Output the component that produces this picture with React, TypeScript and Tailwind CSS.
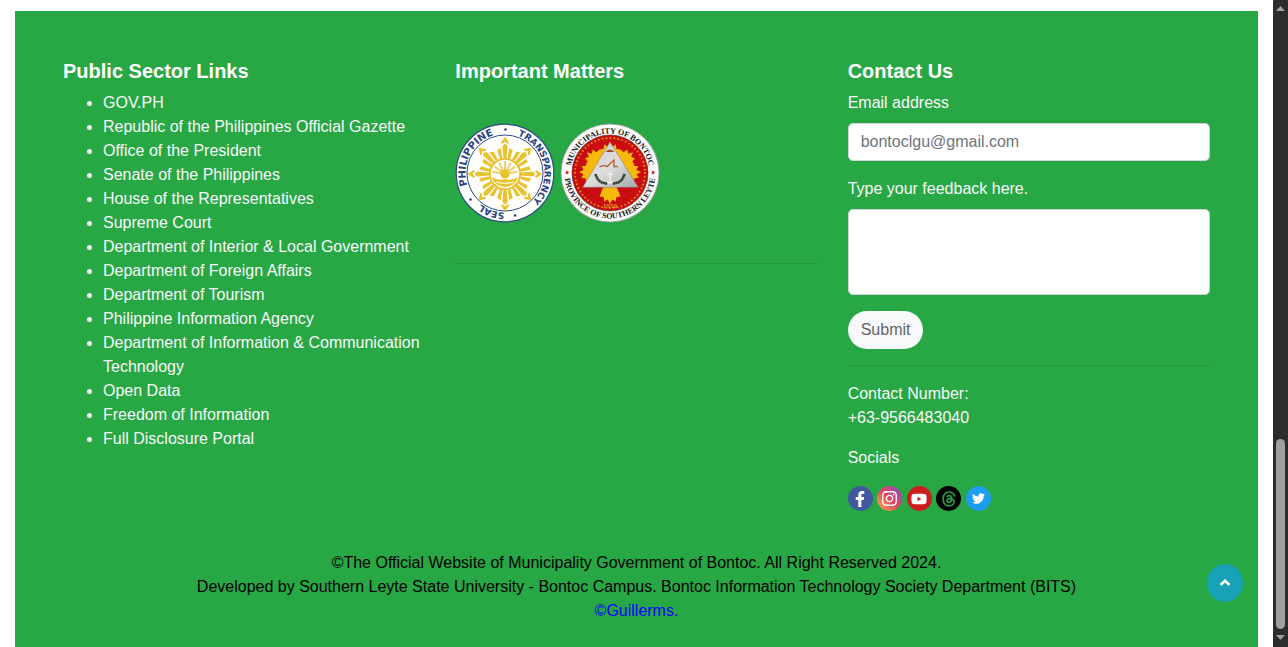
import React from "react";
import { FaFacebookF, FaInstagram, FaTwitter, FaYoutube } from "react-icons/fa";
import { FaThreads } from "react-icons/fa6";

const sectorLinks = [
  "GOV.PH",
  "Republic of the Philippines Official Gazette",
  "Office of the President",
  "Senate of the Philippines",
  "House of the Representatives",
  "Supreme Court",
  "Department of Interior & Local Government",
  "Department of Foreign Affairs",
  "Department of Tourism",
  "Philippine Information Agency",
  "Department of Information & Communication Technology",
  "Open Data",
  "Freedom of Information",
  "Full Disclosure Portal",
];

const socials = [
  { name: "Facebook", Icon: FaFacebookF, circle: "bg-[#4059a0] text-white", size: "size-4" },
  {
    name: "Instagram",
    Icon: FaInstagram,
    circle: "bg-linear-to-tr from-[#fdb045] via-[#e1405f] to-[#8a3ac8] text-white",
    size: "size-[17px]",
  },
  { name: "YouTube", Icon: FaYoutube, circle: "bg-[#cd1c1f] text-white", size: "size-4" },
  { name: "Threads", Icon: FaThreads, circle: "bg-black text-[#28a745]", size: "size-4 stroke-[#28a745] [stroke-width:12px]" },
  { name: "Twitter", Icon: FaTwitter, circle: "bg-[#1d9df0] text-white", size: "size-[13px]" },
];

const eighths = [0, 45, 90, 135, 180, 225, 270, 315];
const sunClusters = [0, 48, 88, 180, 272, 312];

function TransparencySeal() {
  return (
    <svg viewBox="0 0 100 100" className="size-[100px]" role="img" aria-label="Transparency Seal">
      <defs>
        <path id="ts-ring" d="M50 89.5A39.5 39.5 0 0 1 50 10.5A39.5 39.5 0 0 1 50 89.5" />
        <path id="ts-ring-low" d="M50 10.5A39.5 39.5 0 0 1 50 89.5A39.5 39.5 0 0 1 50 10.5" />
      </defs>
      <circle cx="50" cy="50" r="48.8" fill="#fff" stroke="#2f4a86" strokeWidth="1.2" />
      <circle cx="50" cy="50" r="38" fill="#fefefa" stroke="#2f4a86" strokeWidth="1" />
      <g fill="#27417f" fontFamily="'DejaVu Sans', sans-serif" fontWeight="700" textAnchor="middle">
        <text fontSize="10"><textPath href="#ts-ring" startOffset="32.6%">PHILIPPINE</textPath></text>
        <text fontSize="9"><textPath href="#ts-ring" startOffset="71.5%">TRANSPARENCY</textPath></text>
        <text fontSize="9"><textPath href="#ts-ring-low" startOffset="55.3%">SEAL</textPath></text>
      </g>
      <g fill="#27417f">
        <circle cx="50.5" cy="6.5" r="1.3" />
        <circle cx="60" cy="92.5" r="1.3" />
        <circle cx="15.5" cy="76.5" r="1.3" />
      </g>
      <g fill="#e8c22f">
        {eighths.map((angle) => (
          <g key={angle} transform={`rotate(${angle} 50 51)`}>
            <path d="M48.4 35L47.4 23L50 20.6L52.6 23L51.6 35Z" />
            <path d="M47.4 35L45.7 25L42.2 27L44.9 36Z" />
            <path d="M52.6 35L54.3 25L57.8 27L55.1 36Z" />
            <path d="M50 13.8L54 19.8L52.6 21L50 18.4L47.4 21L46 19.8Z" />
          </g>
        ))}
      </g>
      <circle cx="50" cy="51" r="15.2" fill="#fff" stroke="#e5bd2c" strokeWidth="1.8" />
      <g stroke="#ead06a" strokeWidth="2">
        {[-80, -54, -28, 0, 28, 54, 80].map((angle) => (
          <path key={angle} d="M50 47V38.2" transform={`rotate(${angle} 50 51)`} />
        ))}
      </g>
      <path d="M37 54Q43 58 50 56Q57 58 63 54Q61 63 50 64Q39 63 37 54Z" fill="#e8c22f" />
      <path d="M41 59Q50 61.5 59 59" fill="none" stroke="#fff" strokeWidth="1.2" />
      <circle cx="50" cy="51" r="4.6" fill="#e8c22f" />
    </svg>
  );
}

function BontocSeal() {
  return (
    <svg viewBox="0 0 100 100" className="size-[100px]" role="img" aria-label="Municipality of Bontoc seal">
      <defs>
        <path id="bs-top" d="M50 89.5A39.5 39.5 0 0 1 50 10.5A39.5 39.5 0 0 1 50 89.5" />
        <path id="bs-bottom" d="M50 4.5A45.5 45.5 0 0 0 50 95.5A45.5 45.5 0 0 0 50 4.5" />
        <linearGradient id="bs-silver" x1="0" y1="0" x2="1" y2="1">
          <stop offset="0" stopColor="#c5c5c5" />
          <stop offset="0.5" stopColor="#dedede" />
          <stop offset="1" stopColor="#a8a8a8" />
        </linearGradient>
      </defs>
      <circle cx="50" cy="50" r="49" fill="#fcfcfc" stroke="#999" strokeWidth="0.8" />
      <circle cx="50" cy="50" r="38" fill="#c90d10" stroke="#5d1714" strokeWidth="0.6" />
      <g fill="#151515" fontFamily="'Liberation Serif', serif" fontWeight="700" fontSize="8" textAnchor="middle">
        <text><textPath href="#bs-top" startOffset="50%">MUNICIPALITY OF BONTOC</textPath></text>
        <text><textPath href="#bs-bottom" startOffset="50%">PROVINCE OF SOUTHERN LEYTE</textPath></text>
      </g>
      <g fill="#c4161c">
        {[7, 93].map((x) => (
          <path
            key={x}
            transform={`translate(${x} 49.5)`}
            d="M0-2.4L.7-.7L2.4-.7L1 .4L1.5 2.1L0 1.1L-1.5 2.1L-1-.4L-2.4-.7L-.7-.7Z"
          />
        ))}
      </g>
      <circle cx="50" cy="50" r="35" fill="none" stroke="#e29a20" strokeWidth="1.9" strokeLinecap="round" strokeDasharray="0 3.93" />
      <g fill="#f7b90b">
        {sunClusters.map((angle) => (
          <path
            key={angle}
            transform={`rotate(${angle} 50 50)`}
            d="M45 40L39.5 26.5L43.6 26L44.2 21.5L47.8 23.5L50 19L52.2 23.5L55.8 21.5L56.4 26L60.5 26.5L55 40Z"
          />
        ))}
      </g>
      <path d="M50 19L78.3 64.3H22.7Z" fill="url(#bs-silver)" stroke="#777" strokeWidth="0.5" />
      <path d="M45.5 29Q50 24 54.5 29Z" fill="#a34a21" />
      <path d="M39.5 44Q44 41.5 47 43.5L54 37V43.5H58" fill="none" stroke="#b6602c" strokeWidth="1.4" />
      <path d="M35.5 51Q38 60.5 47.5 60.5M64.5 51Q62 60.5 52.5 60.5" fill="none" stroke="#263c28" strokeWidth="2.6" strokeDasharray="2 0.4" />
      <path d="M50 48V60M47 51H53M47 58Q50 62 53 58" fill="none" stroke="#f2f2f2" strokeWidth="1.3" />
      <text x="50" y="85" fill="#e09a25" fontFamily="'Liberation Serif', serif" fontWeight="700" fontSize="7" textAnchor="middle">
        1950
      </text>
    </svg>
  );
}

function ContactForm() {
  return (
    <form onSubmit={(event) => event.preventDefault()}>
      <label htmlFor="email" className="mb-2 block">Email address</label>
      <input
        id="email"
        type="email"
        placeholder="bontoclgu@gmail.com"
        className="mb-4 block h-[38px] w-full rounded-[5px] border border-[#ced4da] bg-white px-3 text-[#495057] placeholder:text-[#6c757d]"
      />
      <label htmlFor="feedback" className="mb-2 block">Type your feedback here.</label>
      <textarea
        id="feedback"
        className="mb-4 block h-[86px] w-full resize-none rounded-[5px] border border-[#ced4da] bg-white px-3 py-1.5 text-[#495057]"
      />
      <button type="submit" className="block h-[38px] rounded-full bg-[#f8f9fa] px-[13px] text-[#5f6468]">
        Submit
      </button>
    </form>
  );
}

export default function App() {
  return (
    <div className="flex min-h-screen bg-white font-['Liberation_Sans',Arial,sans-serif] text-base text-[#f8f9fa]">
      <div className="flex min-w-0 flex-1 px-[15px] pt-[11px]">
        <footer className="relative flex-1 bg-[#28a745] pt-12">
          <div className="grid grid-cols-3 gap-[30px] px-12">
            <section>
              <h5 className="mb-2 text-xl leading-6 font-bold text-white">Public Sector Links</h5>
              <ul className="list-disc pl-10">
                {sectorLinks.map((label) => (
                  <li key={label}>
                    <a href="#">{label}</a>
                  </li>
                ))}
              </ul>
            </section>

            <section>
              <h5 className="mb-10 text-xl leading-6 font-bold text-white">Important Matters</h5>
              <div className="flex gap-[5px]">
                <a href="#"><TransparencySeal /></a>
                <a href="#"><BontocSeal /></a>
              </div>
              <hr className="mt-10 border-black/10" />
            </section>

            <section>
              <h5 className="mb-2 text-xl leading-6 font-bold text-white">Contact Us</h5>
              <ContactForm />
              <hr className="my-4 border-black/10" />
              <p className="mb-4">
                Contact Number:
                <br />
                +63-9566483040
              </p>
              <p className="mb-4">Socials</p>
              <div className="flex w-[143px] justify-between">
                {socials.map(({ name, Icon, circle, size }) => (
                  <a
                    key={name}
                    href="#"
                    aria-label={name}
                    className={`flex size-[25px] items-center justify-center rounded-full ${circle}`}
                  >
                    <Icon className={size} />
                  </a>
                ))}
              </div>
            </section>
          </div>

          <div className="mt-10 pb-6 text-center text-black">
            <p>©The Official Website of Municipality Government of Bontoc. All Right Reserved 2024.</p>
            <p>
              Developed by Southern Leyte State University - Bontoc Campus. Bontoc Information Technology Society
              Department (BITS)
            </p>
            <p>
              <a href="#" className="text-[#0000ff]">©Guillerms.</a>
            </p>
          </div>

          <button
            type="button"
            aria-label="Back to top"
            className="absolute right-[15px] bottom-[45px] flex h-[38px] w-9 items-center justify-center rounded-[50%] bg-[#17a2b8]"
          >
            <svg viewBox="0 0 12 8" className="h-2 w-3" fill="none" stroke="#fff" strokeWidth="2.6">
              <path d="M1.5 6L6 1.7L10.5 6" />
            </svg>
          </button>
        </footer>
      </div>

      <div className="flex w-[15px] flex-col items-center justify-between bg-[#2c2c2c] pt-1.5 pb-[7px]" aria-hidden="true">
        <svg viewBox="0 0 9 5" className="h-[5px] w-[9px]" fill="#9f9f9f">
          <path d="M0 5L4.5 0L9 5Z" />
        </svg>
        <div className="flex flex-col items-center gap-1.5">
          <div className="h-[190px] w-[9px] rounded-full bg-[#9f9f9f]" />
          <svg viewBox="0 0 9 5" className="h-[5px] w-[9px]" fill="#9f9f9f">
            <path d="M0 0H9L4.5 5Z" />
          </svg>
        </div>
      </div>
    </div>
  );
}
